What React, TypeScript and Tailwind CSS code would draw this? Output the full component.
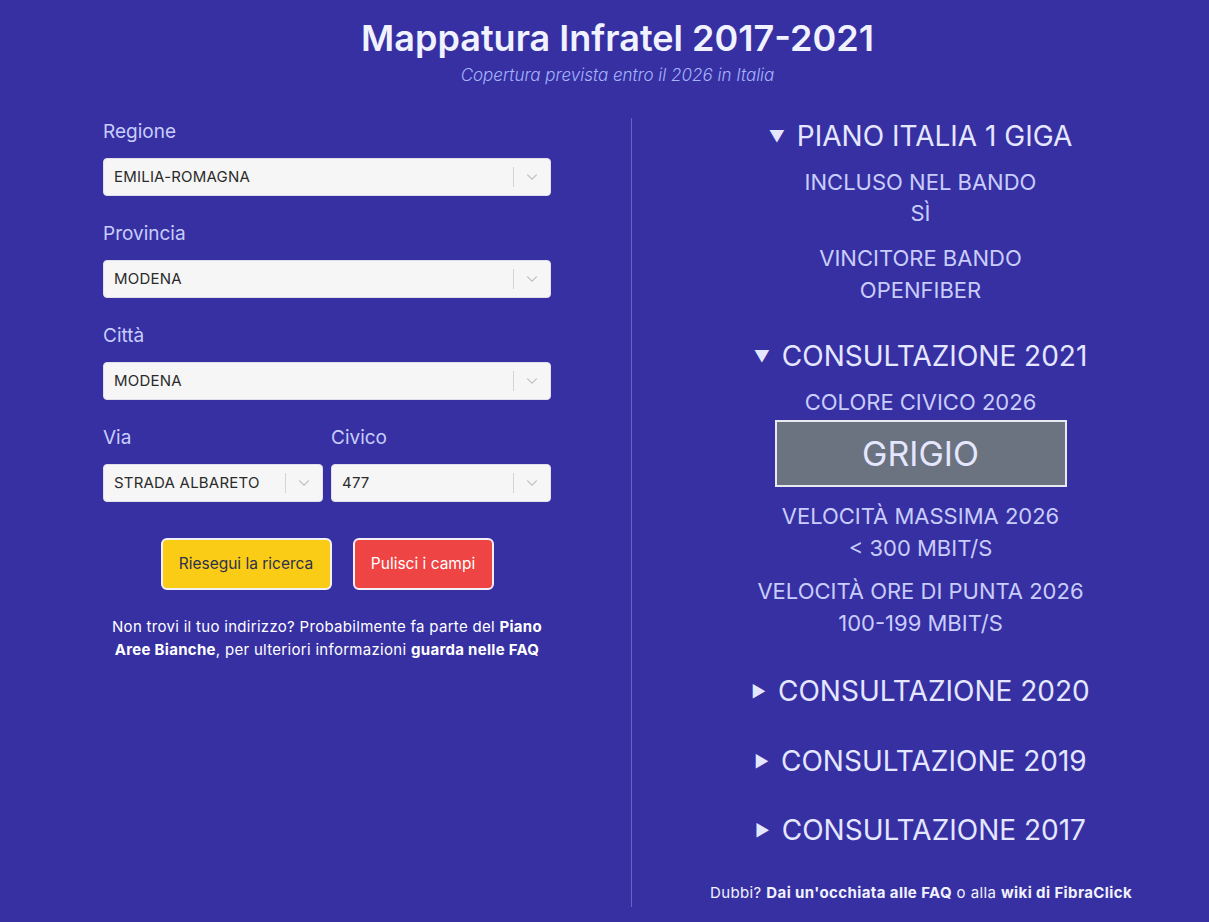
import { ChevronDown } from "lucide-react";

function Field({ label, value, className = "" }: { label: string; value: string; className?: string }) {
  return (
    <div className={className}>
      <div className="text-[19px] leading-[28px] text-[#c7cdfb] mb-3">{label}</div>
      <div className="h-[38px] bg-[#f6f6f6] rounded-[4px] flex items-center border border-[#e0e0ea]">
        <div className="flex-1 pl-[10px] text-[15px] tracking-[0.2px] text-[#2b2b2b] truncate">{value}</div>
        <div className="w-px h-[20px] bg-[#d4d4d8]" />
        <div className="w-[36px] flex items-center justify-center text-[#c4c4c8]">
          <ChevronDown size={18} strokeWidth={1.5} />
        </div>
      </div>
    </div>
  );
}

function Heading({ open, children, className = "" }: { open?: boolean; children: React.ReactNode; className?: string }) {
  return (
    <div className={`flex items-center justify-center gap-3 text-[28px] leading-[36px] text-[#e4e7ff] ${className}`}>
      <span className="text-[16px]">{open ? "▼" : "►"}</span>
      <span>{children}</span>
    </div>
  );
}

export default function App() {
  return (
    <div className="min-h-screen bg-[#3730a3] font-['Inter',sans-serif]">
      {/* header */}
      <div className="pt-[18px] pl-[26px] text-center">
        <h1 className="text-[36px] leading-[40px] font-semibold text-[#f1f2ff]">Mappatura Infratel 2017-2021</h1>
        <p className="mt-[5px] text-[17px] leading-[24px] italic font-light text-[#a5b4fc]">
          Copertura prevista entro il 2026 in Italia
        </p>
      </div>

      <div className="flex mt-[31px]">
        {/* left column */}
        <div className="w-[631px] pl-[103px] pr-[80px]">
          <Field label="Regione" value="EMILIA-ROMAGNA" />
          <Field label="Provincia" value="MODENA" className="mt-6" />
          <Field label="Città" value="MODENA" className="mt-6" />
          <div className="flex gap-2 mt-6">
            <Field label="Via" value="STRADA ALBARETO" className="flex-1" />
            <Field label="Civico" value="477" className="flex-1" />
          </div>

          <div className="flex justify-center gap-[21px] mt-9">
            <button className="h-[52px] w-[171px] rounded-[6px] border-2 border-[#f4f0f8] bg-[#facc15] text-[15.5px] text-[#2d3150]">
              Riesegui la ricerca
            </button>
            <button className="h-[52px] w-[141px] rounded-[6px] border-2 border-[#f4f0f8] bg-[#ef4444] text-[15.5px] text-white">
              Pulisci i campi
            </button>
          </div>

          <p className="mt-[25px] text-center text-[15px] tracking-[0.3px] leading-[23px] text-white">
            Non trovi il tuo indirizzo? Probabilmente fa parte del <b>Piano</b>
            <br />
            <b>Aree Bianche</b>, per ulteriori informazioni <b>guarda nelle FAQ</b>
          </p>
        </div>

        {/* right column */}
        <div className="flex-1 border-l border-[#6963c3] pb-[4px] text-center">
          <Heading open>PIANO ITALIA 1 GIGA</Heading>
          <div className="mt-[13px] text-[22px] leading-[31px] text-[#c9cdfb]">
            <div>INCLUSO NEL BANDO</div>
            <div>SÌ</div>
          </div>
          <div className="mt-[13px] text-[22px] leading-[32px] text-[#c9cdfb]">
            <div>VINCITORE BANDO</div>
            <div>OPENFIBER</div>
          </div>

          <Heading open className="mt-[32px]">CONSULTAZIONE 2021</Heading>
          <div className="mt-[12px] text-[22px] leading-[32px] text-[#c9cdfb]">COLORE CIVICO 2026</div>
          <div className="mx-auto mt-[2px] w-[292px] h-[67px] flex items-center justify-center bg-[#6b7280] border-2 border-[#e7e8f0] text-[34px] text-[#e4e7ff]">
            GRIGIO
          </div>
          <div className="mt-[13px] text-[22px] leading-[32px] text-[#c9cdfb]">
            <div>VELOCITÀ MASSIMA 2026</div>
            <div>&lt; 300 MBIT/S</div>
          </div>
          <div className="mt-[11px] text-[22px] leading-[32px] text-[#c9cdfb]">
            <div>VELOCITÀ ORE DI PUNTA 2026</div>
            <div>100-199 MBIT/S</div>
          </div>

          <Heading className="mt-[34px]">CONSULTAZIONE 2020</Heading>
          <Heading className="mt-[34px]">CONSULTAZIONE 2019</Heading>
          <Heading className="mt-[33px]">CONSULTAZIONE 2017</Heading>

          <p className="mt-[35px] pl-[1px] text-[15px] tracking-[0.4px] leading-[20px] text-[#f1f2ff]">
            Dubbi? <b>Dai un'occhiata alle FAQ</b> o alla <b>wiki di FibraClick</b>
          </p>
        </div>
      </div>
    </div>
  );
}
